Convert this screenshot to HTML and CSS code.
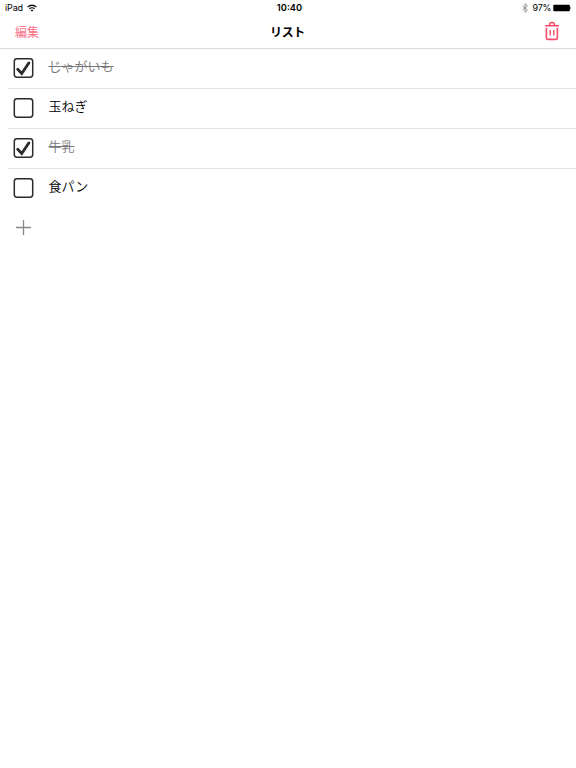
FILE: index.html
```html
<!DOCTYPE html>
<html lang="ja">
<head>
<meta charset="utf-8">
<title>リスト</title>
<link rel="stylesheet" href="styles.css">
</head>
<body>
<header class="top">
  <div class="status">
    <div class="status-left"><span>iPad</span>
      <svg class="wifi" width="10" height="8" viewBox="0 0 10 8" fill="none" stroke="#111" stroke-width="1.3"><path d="M.6 3.1a6.2 6.2 0 0 1 8.8 0M2.4 4.9a3.7 3.7 0 0 1 5.2 0"/><path d="M5 7.6 3.6 6.2a2 2 0 0 1 2.8 0z" fill="#111" stroke="none"/></svg>
    </div>
    <div class="clock">10:40</div>
    <div class="status-right">
      <svg class="bluetooth" width="6" height="10" viewBox="0 0 6 10" fill="none" stroke="#888" stroke-width=".9"><path d="M.4 2.7 5.4 7.2 3 9.4V.6l2.4 2.2-5 4.5"/></svg>
      <span class="percent">97%</span>
      <svg class="battery" width="19" height="8" viewBox="0 0 19 8"><rect x=".3" y=".8" width="16.6" height="6.4" rx="1" fill="#000"/><path d="M17.4 2.8q1.4 1.2 0 2.4z" fill="#000"/></svg>
    </div>
  </div>
  <nav class="nav">
    <span class="edit">編集</span>
    <h1 class="title">リスト</h1>
    <svg class="trash" width="14" height="20" viewBox="0 0 14 20" fill="none" stroke="#fb4d6b" stroke-width="1.6"><path d="M.6 4.8h12.8M4.7 4.4V3.8a2.3 2.3 0 0 1 4.6 0v.6M1.4 7.2v9.8q0 1.4 1.4 1.4h8.2q1.4 0 1.4-1.4V7.2" stroke-linecap="round"/><path d="M5.2 9v5.6M8.8 9v5.6" stroke-width="1.4"/></svg>
  </nav>
</header>
<main>
  <ul class="list">
    <li class="item done"><svg class="check" width="21" height="20" viewBox="0 0 21 20"><rect class="box" x="1.3" y=".8" width="18.4" height="18.4" rx="2.7"/><path class="tick" d="m4.7 11.3 4 4.2 7.2-10.6"/></svg><span class="label">じゃがいも</span></li>
    <li class="item"><svg class="check" width="21" height="20" viewBox="0 0 21 20"><rect class="box" x="1.3" y=".8" width="18.4" height="18.4" rx="2.7"/></svg><span class="label">玉ねぎ</span></li>
    <li class="item done"><svg class="check" width="21" height="20" viewBox="0 0 21 20"><rect class="box" x="1.3" y=".8" width="18.4" height="18.4" rx="2.7"/><path class="tick" d="m4.7 11.3 4 4.2 7.2-10.6"/></svg><span class="label">牛乳</span></li>
    <li class="item"><svg class="check" width="21" height="20" viewBox="0 0 21 20"><rect class="box" x="1.3" y=".8" width="18.4" height="18.4" rx="2.7"/></svg><span class="label">食パン</span></li>
  </ul>
  <svg class="add" width="15" height="15" viewBox="0 0 15 15" stroke="#888" stroke-width="1.3"><path d="M0 7.5h15M7.5 0v15"/></svg>
</main>
</body>
</html>
```
FILE: styles.css
```css
* { box-sizing: border-box; }

body {
  margin: 0;
  min-height: 768px;
  background: #fff;
  color: #000;
  font-family: Inter, "Noto Sans CJK JP", sans-serif;
}

svg { display: block; flex: none; }

.top {
  height: 49px;
  border-bottom: 1px solid #dadada;
}

.status {
  display: grid;
  grid-template-columns: 1fr auto 1fr;
  height: 16px;
  align-items: center;
  padding: 0 4px 0 5px;
  font-size: 9px;
  line-height: 16px;
}

.status-left, .status-right { display: flex; align-items: center; }
.status-left { gap: 4px; letter-spacing: -.15px; }
.status-right { justify-content: flex-end; }
.bluetooth { margin-right: 5px; }
.percent { letter-spacing: -.3px; }
.battery { margin-left: 2px; }
.clock { margin-left: 2px; font-weight: 600; font-size: 9.3px; }

.nav {
  display: grid;
  grid-template-columns: 1fr auto 1fr;
  align-items: center;
  height: 30px;
  padding: 0 17px 0 15px;
}

.edit { color: #fc6f87; font-size: 12px; }
.title { margin: 0 0 0 1px; font-size: 12px; font-weight: 700; letter-spacing: -.4px; }
.trash { justify-self: end; }

.list { margin: 0; padding: 0; list-style: none; }

.item {
  display: flex;
  align-items: center;
  height: 40px;
  margin-left: 8px;
  padding-left: 5px;
  border-bottom: 1px solid #e3e3e3;
}

.item:last-child { border-bottom-color: transparent; }
.check { margin-top: -1px; }
.box { fill: none; stroke: #2b2b2d; stroke-width: 1.5; }
.tick { fill: none; stroke: #2b2b2d; stroke-width: 2.8; stroke-linecap: round; }

.label {
  margin: -5px 0 0 14.5px;
  font-size: 13px;
  font-weight: 350;
  line-height: 20px;
}

.done .label { color: #777; text-decoration: line-through; text-decoration-thickness: 1px; }
.add { margin: 11px 0 0 16px; }
```
